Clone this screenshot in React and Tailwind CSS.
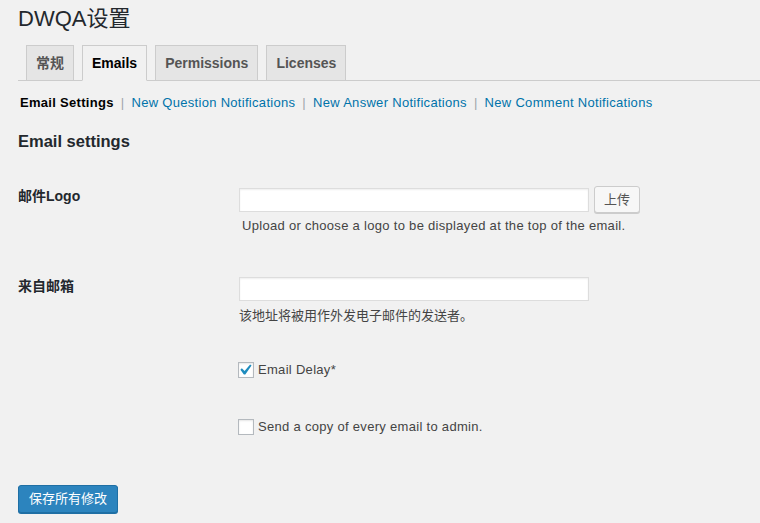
import { useState } from 'react';

const font = { fontFamily: '"Liberation Sans", "Noto Sans CJK SC", sans-serif' };

const tabs = ['常规', 'Emails', 'Permissions', 'Licenses'];
const subLinks = ['New Question Notifications', 'New Answer Notifications', 'New Comment Notifications'];

const Checkbox = ({ checked, onChange, label }) => (
    <label className="flex items-center cursor-pointer text-[13px] leading-[16px] tracking-[0.3px] text-[#444]">
        <span
            onClick={onChange}
            className="w-4 h-4 bg-white border border-[#b4b9be] shadow-[inset_0_1px_2px_rgba(0,0,0,0.1)] flex items-center justify-center"
        >
            {checked && (
                <svg width="14" height="14" viewBox="4.5 3.5 13 13">
                    <path d="M14.83 4.89l1.34.94-5.81 8.38H9.02L5.78 9.67l1.34-1.25 2.57 2.4z" fill="#1e8cbe" />
                </svg>
            )}
        </span>
        <span className="ml-[4px]">{label}</span>
    </label>
);

export default function App() {
    const [active, setActive] = useState('Emails');
    const [delay, setDelay] = useState(true);
    const [copy, setCopy] = useState(false);

    return (
        <div className="min-h-[523px] bg-[#f1f1f1] pl-[18px] pt-[4px] text-[#444]" style={font}>
            <h1 className="text-[22px] leading-[29px] font-normal text-[#23282d]">DWQA设置</h1>

            {/* Tabs */}
            <div className="mt-[12px] flex items-end gap-[8px] pl-[8px] border-b border-[#ccc]">
                {tabs.map((t) => (
                    <button
                        key={t}
                        onClick={() => setActive(t)}
                        className={`-mb-px px-[9px] py-[5px] text-[14px] leading-[24px] font-bold border border-[#ccc] ${
                            active === t ? 'bg-[#f1f1f1] border-b-[#f1f1f1] text-black' : 'bg-[#e5e5e5] text-[#555]'
                        }`}
                    >
                        {t}
                    </button>
                ))}
            </div>

            {/* Sub navigation */}
            <div className="mt-[12px] pl-[2px] text-[13px] leading-[20px] tracking-[0.3px] flex items-center">
                <span className="font-bold text-black">Email Settings</span>
                {subLinks.map((l) => (
                    <span key={l} className="flex items-center">
                        <span className="px-[7px] text-[#a0a5aa]">|</span>
                        <a href="#" className="text-[#0073aa]">{l}</a>
                    </span>
                ))}
            </div>

            <h2 className="mt-[16px] text-[16.5px] leading-[24px] font-bold text-[#23282d]">Email settings</h2>

            {/* 邮件Logo */}
            <div className="mt-[33px] flex">
                <div className="w-[221px] text-[14px] leading-[20px] font-bold text-[#23282d]">邮件Logo</div>
                <div>
                    <div className="flex items-center gap-[5px]">
                        <input className="w-[350px] h-[24px] bg-white border border-[#ddd] shadow-[inset_0_1px_2px_rgba(0,0,0,0.07)] outline-none px-1 text-[13px]" />
                        <button className="h-[27px] px-[9px] bg-[#f7f7f7] border border-[#ccc] rounded-[3px] shadow-[0_1px_0_#ccc] text-[13px] text-[#555]">上传</button>
                    </div>
                    <p className="mt-[4px] pl-[3px] text-[13px] leading-[18px] tracking-[0.3px]">Upload or choose a logo to be displayed at the top of the email.</p>
                </div>
            </div>

            {/* 来自邮箱 */}
            <div className="mt-[41px] flex">
                <div className="w-[221px] text-[14px] leading-[20px] font-bold text-[#23282d]">来自邮箱</div>
                <div>
                    <input className="mt-[1px] w-[350px] h-[24px] bg-white border border-[#ddd] shadow-[inset_0_1px_2px_rgba(0,0,0,0.07)] outline-none px-1 text-[13px] block" />
                    <p className="mt-[6px] text-[13px] leading-[18px]">该地址将被用作外发电子邮件的发送者。</p>
                </div>
            </div>

            <div className="mt-[37px] pl-[220px]">
                <Checkbox checked={delay} onChange={() => setDelay(!delay)} label="Email Delay*" />
            </div>
            <div className="mt-[41px] pl-[220px]">
                <Checkbox checked={copy} onChange={() => setCopy(!copy)} label="Send a copy of every email to admin." />
            </div>

            <button className="mt-[50px] h-[28px] px-[10px] bg-[#2c84be] border border-[#1f6fa4] rounded-[3px] shadow-[0_1px_0_#1f6fa4] text-[13px] text-white">
                保存所有修改
            </button>
        </div>
    );
}
